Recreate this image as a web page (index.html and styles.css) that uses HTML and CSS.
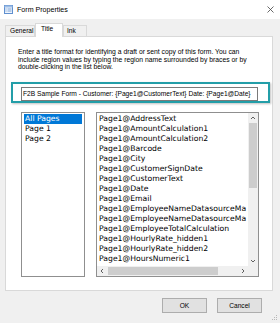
FILE: index.html
```html
<!DOCTYPE html>
<html lang="en">
<head>
    <meta charset="UTF-8">
    <title>Form Properties</title>
    <link rel="stylesheet" href="styles.css">
</head>
<body>
    <div class="window">
        <div class="titlebar">
            <svg class="app-icon" width="9" height="9" viewBox="0 0 9 9">
                <rect x="0.5" y="0.5" width="8" height="8" fill="#eef4fc" stroke="#5f8fcf"/>
                <rect x="0.5" y="0.5" width="8" height="2" fill="#9dbde6"/>
                <rect x="1.5" y="3.5" width="1" height="1" fill="#5f8fcf"/>
                <rect x="1.5" y="5.5" width="1" height="1" fill="#5f8fcf"/>
                <line x1="3.5" y1="4" x2="7.5" y2="4" stroke="#7aa2d8"/>
                <line x1="3.5" y1="6" x2="7.5" y2="6" stroke="#7aa2d8"/>
            </svg>
            <span class="title">Form Properties</span>
            <svg class="close" width="7" height="7" viewBox="0 0 7 7">
                <path d="M0.5 0.5 L6.5 6.5 M6.5 0.5 L0.5 6.5" stroke="#444" stroke-width="0.8" fill="none"/>
            </svg>
        </div>

        <div class="tabs">
            <div class="tab tab-general">General</div>
            <div class="tab tab-title active">Title</div>
            <div class="tab tab-ink">Ink</div>
        </div>

        <div class="panel">
            <p class="desc">Enter a title format for identifying a draft or sent copy of this form. You can<br>include region values by typing the region name surrounded by braces or by<br>double-clicking in the list below.</p>

            <div class="highlight">
                <div class="textbox">F2B Sample Form - Customer: {Page1@CustomerText} Date: {Page1@Date}</div>
            </div>

            <div class="lists">
                <div class="listbox pages">
                    <div class="item selected">All Pages</div>
                    <div class="item">Page 1</div>
                    <div class="item">Page 2</div>
                </div>

                <div class="listbox regions">
                    <div class="items">
                        <div class="item">Page1@AddressText</div>
                        <div class="item">Page1@AmountCalculation1</div>
                        <div class="item">Page1@AmountCalculation2</div>
                        <div class="item">Page1@Barcode</div>
                        <div class="item">Page1@City</div>
                        <div class="item">Page1@CustomerSignDate</div>
                        <div class="item">Page1@CustomerText</div>
                        <div class="item">Page1@Date</div>
                        <div class="item">Page1@Email</div>
                        <div class="item">Page1@EmployeeNameDatasourceMa</div>
                        <div class="item">Page1@EmployeeNameDatasourceMa</div>
                        <div class="item">Page1@EmployeeTotalCalculation</div>
                        <div class="item">Page1@HourlyRate_hidden1</div>
                        <div class="item">Page1@HourlyRate_hidden2</div>
                        <div class="item">Page1@HoursNumeric1</div>
                    </div>
                    <div class="vscroll">
                        <svg class="arrow" width="10" height="10" viewBox="0 0 10 10">
                            <path d="M3 6 L5 4 L7 6" stroke="#606060" stroke-width="1" fill="none"/>
                        </svg>
                        <div class="vtrack"><div class="vthumb"></div></div>
                        <svg class="arrow" width="10" height="10" viewBox="0 0 10 10">
                            <path d="M3 4 L5 6 L7 4" stroke="#606060" stroke-width="1" fill="none"/>
                        </svg>
                    </div>
                    <div class="hscroll">
                        <svg class="arrow" width="10" height="10" viewBox="0 0 10 10">
                            <path d="M6 3 L4 5 L6 7" stroke="#606060" stroke-width="1" fill="none"/>
                        </svg>
                        <div class="htrack"><div class="hthumb"></div></div>
                        <svg class="arrow" width="10" height="10" viewBox="0 0 10 10">
                            <path d="M4 3 L6 5 L4 7" stroke="#606060" stroke-width="1" fill="none"/>
                        </svg>
                    </div>
                    <div class="corner"></div>
                </div>
            </div>
        </div>

        <div class="buttons">
            <div class="btn">OK</div>
            <div class="btn">Cancel</div>
        </div>

        <svg class="grip" width="6" height="6" viewBox="0 0 6 6">
            <rect x="4" y="0" width="1" height="1" fill="#b8b8b8"/>
            <rect x="2" y="2" width="1" height="1" fill="#b8b8b8"/>
            <rect x="4" y="2" width="1" height="1" fill="#b8b8b8"/>
            <rect x="0" y="4" width="1" height="1" fill="#b8b8b8"/>
            <rect x="2" y="4" width="1" height="1" fill="#b8b8b8"/>
            <rect x="4" y="4" width="1" height="1" fill="#b8b8b8"/>
        </svg>
    </div>
</body>
</html>
```

FILE: styles.css
```css
body {
    margin: 0;
    padding: 0;
    font-family: "Liberation Sans", Arial, sans-serif;
    font-size: 6.6px;
    color: #000;
    background-color: #f0f0f0;
}
.window {
    position: relative;
    width: 280px;
    height: 323px;
    display: flex;
    flex-direction: column;
    overflow: hidden;
}
.titlebar {
    height: 19px;
    background-color: #fff;
    display: flex;
    align-items: center;
    padding: 0 6px 0 4px;
}
.app-icon {
    margin-right: 4px;
}
.title {
    flex: 1;
    font-size: 7.1px;
}
.tabs {
    height: 17px;
    display: flex;
    align-items: flex-end;
    padding-left: 5px;
}
.tab {
    box-sizing: border-box;
    height: 11px;
    line-height: 10px;
    padding-left: 4px;
    border: 1px solid #d9d9d9;
    border-bottom: none;
    background-color: #f0f0f0;
}
.tab-general {
    width: 30px;
}
.tab-title {
    width: 28px;
}
.tab-ink {
    width: 24px;
    padding-left: 3px;
}
.tab.active {
    position: relative;
    z-index: 1;
    height: 14px;
    margin-bottom: -1px;
    padding-left: 5px;
    line-height: 10px;
    background-color: #fff;
}
.panel {
    box-sizing: border-box;
    height: 255px;
    margin: 0 7px 0 5px;
    border: 1px solid #d9d9d9;
    background-color: #fff;
    padding: 11px 12px 0 12px;
}
.desc {
    margin: 0;
    font-size: 6.8px;
    line-height: 7.5px;
    white-space: nowrap;
}
.highlight {
    box-sizing: border-box;
    width: 259px;
    height: 21px;
    margin: 11px 0 0 -7px;
    padding: 3px 10px 0 8px;
    border: 2px solid #239ea8;
    box-shadow: 1px 1px 2px rgba(0, 0, 0, 0.25);
}
.textbox {
    box-sizing: border-box;
    height: 14px;
    line-height: 12px;
    padding-left: 1px;
    border: 1px solid #7a7a7a;
    background-color: #fff;
    font-size: 6.65px;
    white-space: nowrap;
    overflow: hidden;
}
.lists {
    display: flex;
    gap: 11px;
    margin: 9px 0 0 3px;
}
.listbox {
    box-sizing: border-box;
    height: 165px;
    border: 1px solid #8f8f8f;
    background-color: #fff;
    font-family: "DejaVu Sans", Verdana, sans-serif;
    font-size: 7.7px;
}
.pages {
    width: 64px;
    padding: 1px;
}
.pages .item {
    height: 10px;
    line-height: 10px;
    margin: 0 1px;
    padding-left: 1px;
}
.pages .item.selected {
    background-color: #0078d7;
    color: #fff;
}
.regions {
    width: 163px;
    display: grid;
    grid-template-columns: 1fr 10px;
    grid-template-rows: 1fr 10px;
}
.items {
    padding: 1px 0 0 2px;
    overflow: hidden;
}
.regions .item {
    height: 10px;
    line-height: 10px;
    white-space: nowrap;
}
.vscroll {
    display: flex;
    flex-direction: column;
    background-color: #f0f0f0;
}
.vtrack {
    flex: 1;
    padding: 0 1px;
}
.vthumb {
    height: 65px;
    background-color: #cdcdcd;
}
.hscroll {
    display: flex;
    background-color: #f0f0f0;
}
.htrack {
    flex: 1;
    padding: 1px 0;
}
.hthumb {
    width: 110px;
    height: 8px;
    margin-left: 1px;
    background-color: #cdcdcd;
}
.arrow {
    display: block;
    flex: none;
}
.corner {
    background-color: #f0f0f0;
}
.buttons {
    display: flex;
    justify-content: flex-end;
    gap: 10px;
    margin: 7px 18px 0 0;
}
.btn {
    box-sizing: border-box;
    width: 45px;
    height: 15px;
    line-height: 13px;
    text-align: center;
    border: 1px solid #adadad;
    background-color: #e1e1e1;
}
.grip {
    position: absolute;
    right: 2px;
    bottom: 2px;
}
```
